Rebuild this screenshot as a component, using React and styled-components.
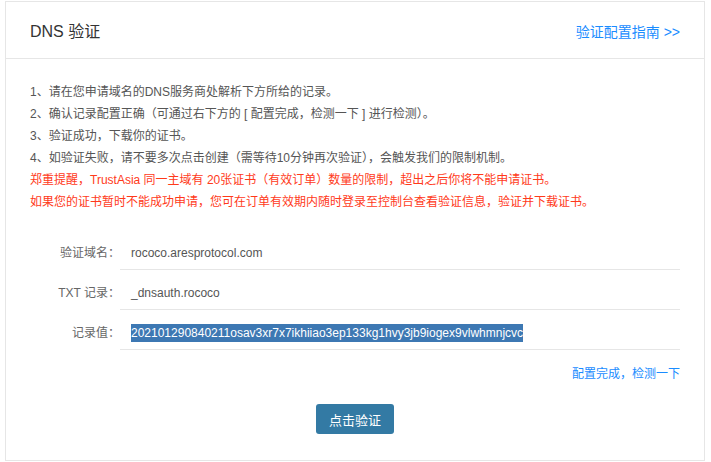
import React from 'react'
import styled, { createGlobalStyle } from 'styled-components'

const GlobalStyle = createGlobalStyle`
    body {
        margin: 0;
        padding: 1px 6px 2px 5px;
        background: #fff;
        font-family: "Liberation Sans", Arial, "Noto Sans CJK SC", sans-serif;
    }
`

const Card = styled.div`
    border: 1px solid #e6e6e6;
    background: #fff;
`

const Header = styled.div`
    height: 56px;
    padding: 0 24px;
    display: flex;
    align-items: center;
    justify-content: space-between;
    border-bottom: 1px solid #e6e6e6;
`

const Title = styled.h2`
    margin: 0;
    font-size: 16px;
    font-weight: normal;
    color: #333;
`

const GuideLink = styled.a`
    font-size: 14px;
    color: #1a8cff;
    cursor: pointer;
    padding-top: 2px;
`

const Body = styled.div`
    padding: 22px 24px 26px;
`

const Notes = styled.ul`
    list-style: none;
    margin: 0;
    padding: 0;
`

const Note = styled.li`
    font-size: 12px;
    line-height: 22px;
    color: ${(p) => (p.$warn ? '#ff3a1a' : '#555')};
`

const Form = styled.div`
    margin-top: 16px;
    padding-right: 0;
`

const Row = styled.div`
    display: grid;
    grid-template-columns: 90px 1fr;
    height: 40px;
    font-size: 12px;
`

const Label = styled.div`
    text-align: right;
    color: #666;
    padding-top: 8px;
    line-height: 32px;
`

const Value = styled.div`
    border-bottom: 1px solid #e6e6e6;
    padding: 8px 0 0 11px;
    line-height: 32px;
    color: #555;
`

const Selected = styled.span`
    background: #3d78b3;
    color: #fff;
    padding: 2px 0;
`

const CheckRow = styled.div`
    display: flex;
    justify-content: flex-end;
    margin-top: 15px;
`

const CheckLink = styled.a`
    font-size: 12px;
    color: #1a8cff;
    cursor: pointer;
`

const Actions = styled.div`
    display: flex;
    justify-content: center;
    margin-top: 23px;
`

const Button = styled.button`
    width: 78px;
    height: 30px;
    border: none;
    border-radius: 3px;
    background: #337aa4;
    color: #fff;
    font-size: 13px;
    font-family: inherit;
    cursor: pointer;
`

const notes = [
    '1、请在您申请域名的DNS服务商处解析下方所给的记录。',
    '2、确认记录配置正确（可通过右下方的 [ 配置完成，检测一下 ] 进行检测）。',
    '3、验证成功，下载你的证书。',
    '4、如验证失败，请不要多次点击创建（需等待10分钟再次验证），会触发我们的限制机制。',
]

const warnings = [
    '郑重提醒，TrustAsia 同一主域有 20张证书（有效订单）数量的限制，超出之后你将不能申请证书。',
    '如果您的证书暂时不能成功申请，您可在订单有效期内随时登录至控制台查看验证信息，验证并下载证书。',
]

function App() {
    return (
        <>
            <GlobalStyle />
            <Card>
                <Header>
                    <Title>DNS 验证</Title>
                    <GuideLink>验证配置指南 &gt;&gt;</GuideLink>
                </Header>
                <Body>
                    <Notes>
                        {notes.map((n) => (
                            <Note key={n}>{n}</Note>
                        ))}
                        {warnings.map((n) => (
                            <Note key={n} $warn>{n}</Note>
                        ))}
                    </Notes>
                    <Form>
                        <Row>
                            <Label>验证域名：</Label>
                            <Value>rococo.aresprotocol.com</Value>
                        </Row>
                        <Row>
                            <Label>TXT 记录：</Label>
                            <Value>_dnsauth.rococo</Value>
                        </Row>
                        <Row>
                            <Label>记录值：</Label>
                            <Value>
                                <Selected>202101290840211osav3xr7x7ikhiiao3ep133kg1hvy3jb9iogex9vlwhmnjcvc</Selected>
                            </Value>
                        </Row>
                    </Form>
                    <CheckRow>
                        <CheckLink>配置完成，检测一下</CheckLink>
                    </CheckRow>
                    <Actions>
                        <Button>点击验证</Button>
                    </Actions>
                </Body>
            </Card>
        </>
    )
}

export default App
